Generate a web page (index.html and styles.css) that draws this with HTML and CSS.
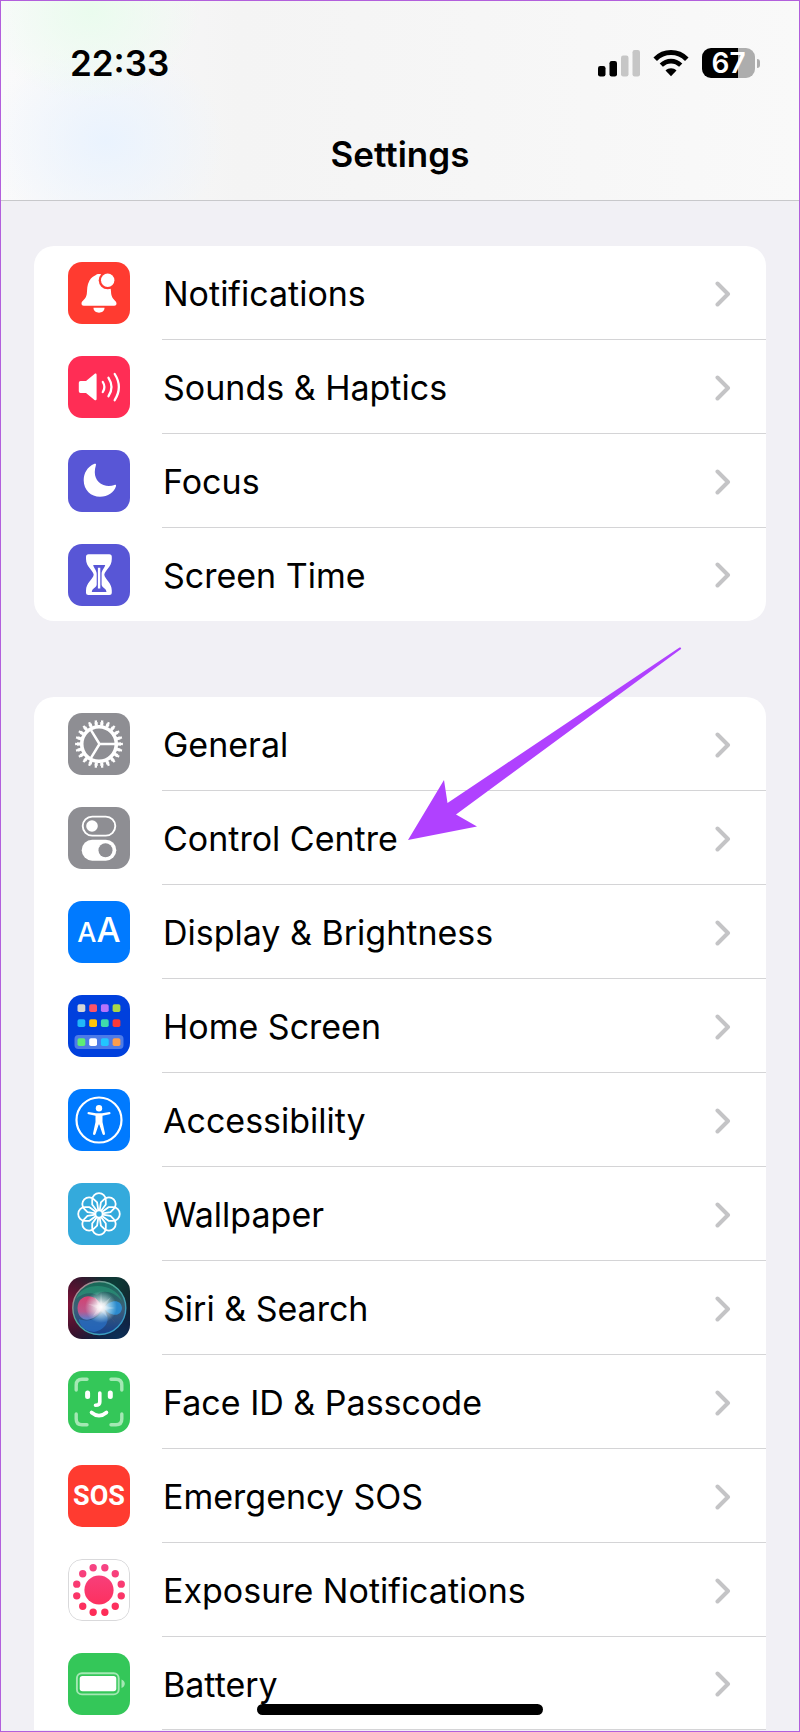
FILE: index.html
```html
<!DOCTYPE html>
<html lang="en">

<head>
  <meta charset="UTF-8">
  <meta name="viewport" content="width=device-width, initial-scale=1.0">
  <title>Settings</title>
  <link rel="stylesheet" href="styles.css">
</head>

<body>
  <svg width="0" height="0" class="defs" aria-hidden="true">
    <symbol id="chevron" viewBox="0 0 16 26">
      <path d="M2.5 2.5L13 13L2.5 23.5" fill="none" stroke="#c4c4c6" stroke-width="4" stroke-linecap="round" stroke-linejoin="round" />
    </symbol>
  </svg>

  <div class="screen">
    <header class="header">
      <div class="status-bar">
        <span class="time">22:33</span>
        <div class="status-icons">
          <svg width="42" height="27" viewBox="0 0 42 27">
            <rect x="0" y="16" width="7.500" height="10.500" rx="2.200" />
            <rect x="11.500" y="11" width="7.500" height="15.500" rx="2.200" />
            <rect x="23" y="5.500" width="7.500" height="21" rx="2.200" fill="#c6c6c6" />
            <rect x="34.500" y="0" width="7.500" height="26.500" rx="2.200" fill="#c6c6c6" />
          </svg>
          <svg width="36" height="27" viewBox="0 0 36 27">
            <path d="M2.200 9.200C11 .3 25 .3 33.800 9.200" fill="none" stroke="#000" stroke-width="5" />
            <path d="M8.300 15.200C14 9.700 22 9.700 27.700 15.200" fill="none" stroke="#000" stroke-width="4.600" />
            <path d="M12.500 20.500C15.500 17.600 20.500 17.600 23.500 20.500L18 26.200Z" />
          </svg>
          <div class="battery"><span>67</span></div>
        </div>
      </div>
      <h1>Settings</h1>
    </header>

    <main>
      <ul class="card">
        <li>
          <a href="#notifications" class="row">
            <svg class="icon red" viewBox="0 0 62 62">
              <path d="M13.500 41.500C13.500 38.500 18 37.500 18.800 32C19.300 27.500 18.800 23 21.500 18.500C23.200 15.300 26 14 27.500 13.300C29 11.500 33 11.500 34.500 13.300C37 14.500 39.300 16.500 40.700 19.500C43 24 42.800 28 43.200 32C44 37.500 48.500 38.500 48.500 41.500C48.500 43 47.500 43.700 46.300 43.700H15.700C14.500 43.700 13.500 43 13.500 41.500Z" fill="#fff" />
              <path d="M25.500 45.800H36.500C36.500 52.300 25.500 52.300 25.500 45.800Z" fill="#fff" />
              <circle cx="39.700" cy="18.300" r="9" fill="#ff3b30" />
              <circle cx="39.700" cy="18.300" r="6.700" fill="#fff" />
            </svg>
            <span class="row-body">Notifications <svg class="chevron"><use href="#chevron" /></svg></span>
          </a>
        </li>
        <li>
          <a href="#sounds" class="row">
            <svg class="icon pink" viewBox="0 0 62 62">
              <path d="M12.500 25H18L26.500 18C27.500 17.200 28.600 17.500 28.600 19V43C28.600 44.300 27.500 44.700 26.500 44L18 37H12.500Q10.800 37 10.800 35.300V26.700Q10.800 25 12.500 25Z" fill="#fff" />
              <path d="M34.800 26Q38 31 34.800 36M40.500 21.800Q46.500 31 40.500 40.200M46.700 18Q55 31 46.700 44.200" fill="none" stroke="#fff" stroke-width="2.300" stroke-linecap="round" />
            </svg>
            <span class="row-body">Sounds &amp; Haptics <svg class="chevron"><use href="#chevron" /></svg></span>
          </a>
        </li>
        <li>
          <a href="#focus" class="row">
            <svg class="icon indigo" viewBox="0 0 62 62">
              <path d="M26.500 13.800C19 17 15.700 23.500 15.700 30.200C15.700 39.800 23 46.800 32 46.800C40 46.800 46 42.500 48 36.300C48.300 35.100 47.500 34.600 46.500 35C43 36.200 39 36.300 35.500 35C28 32.300 25 24.500 27.900 15.200C28.300 14 27.700 13.300 26.500 13.800Z" fill="#fff" />
            </svg>
            <span class="row-body">Focus <svg class="chevron"><use href="#chevron" /></svg></span>
          </a>
        </li>
        <li>
          <a href="#screen-time" class="row">
            <svg class="icon indigo" viewBox="0 0 62 62">
              <path d="M20.500 10.300H41.300Q43.800 10.300 43.800 12.800V15C43.800 23 37 26 36.300 30.700C37 35.500 43.800 38.500 43.800 46.500V48.500Q43.800 51 41.300 51H20.500Q18 51 18 48.500V46.500C18 38.500 25 35.500 25.700 30.700C25 26 18 23 18 15V12.800Q18 10.300 20.500 10.300Z" fill="#fff" />
              <path d="M25.200 21H37.200C36.500 24.500 33.600 26 33.600 30V40.500C33.600 43.500 38.300 44 38.500 48H23.800C24 44 28.700 43.500 28.700 40.500V30C28.700 26 25.800 24.500 25.200 21Z" fill="#5856d6" />
              <path d="M31.100 23.500V44.500" stroke="#fff" stroke-width="2.400" />
              <path d="M27 22.500H35" stroke="#5856d6" stroke-width="2" />
            </svg>
            <span class="row-body">Screen Time <svg class="chevron"><use href="#chevron" /></svg></span>
          </a>
        </li>
      </ul>

      <ul class="card">
        <li>
          <a href="#general" class="row">
            <svg class="icon gray" viewBox="0 0 62 62">
              <g fill="none" stroke="#fff">
                <circle cx="31" cy="31" r="17.300" stroke-width="3.600" />
                <circle cx="31" cy="31" r="20.300" stroke-width="3.400" pathLength="44" stroke-dasharray="1.100 .9" stroke-dashoffset=".55" />
                <circle cx="31" cy="31" r="22.700" stroke-width="2.400" pathLength="44" stroke-dasharray=".7 1.300" stroke-dashoffset=".35" />
                <path d="M31.500 31H47M31.500 31L23 17.100M31.500 31L23 44.900" stroke-width="2.500" />
              </g>
            </svg>
            <span class="row-body">General <svg class="chevron"><use href="#chevron" /></svg></span>
          </a>
        </li>
        <li class="highlighted">
          <a href="#control-centre" class="row">
            <svg class="icon gray" viewBox="0 0 62 62">
              <rect x="14.700" y="9.600" width="32.600" height="19" rx="9.500" fill="none" stroke="#fff" stroke-width="1.900" />
              <circle cx="24" cy="19" r="5.800" fill="#fff" />
              <rect x="13.700" y="32.700" width="34.600" height="21" rx="10.500" fill="#fff" />
              <circle cx="37.500" cy="43.200" r="7" fill="#8e8e93" />
            </svg>
            <span class="row-body">Control Centre <svg class="chevron"><use href="#chevron" /></svg></span>
          </a>
          <svg class="arrow" viewBox="0 0 274 194" aria-hidden="true">
            <path d="M0 193L36 133L39.500 156L271.500 .5Q273.500 0 273 2L48 167.500L69 179.500Z" fill="#b041ff" />
          </svg>
        </li>
        <li>
          <a href="#display" class="row">
            <span class="icon icon-text blue"><span class="small-a">A</span><span class="big-a">A</span></span>
            <span class="row-body">Display &amp; Brightness <svg class="chevron"><use href="#chevron" /></svg></span>
          </a>
        </li>
        <li>
          <a href="#home-screen" class="row">
            <svg class="icon navy" viewBox="0 0 62 62">
              <rect x="6.500" y="40" width="49" height="14" rx="4" fill="#4d7be8" />
              <rect x="9.500" y="9.300" width="7.800" height="7.800" rx="1.800" fill="#d6d6d6" />
              <rect x="21.200" y="9.300" width="7.800" height="7.800" rx="1.800" fill="#fb5468" />
              <rect x="32.900" y="9.300" width="7.800" height="7.800" rx="1.800" fill="#b673fb" />
              <rect x="44.600" y="9.300" width="7.800" height="7.800" rx="1.800" fill="#a9d649" />
              <rect x="9.500" y="24.300" width="7.800" height="7.800" rx="1.800" fill="#21b7f9" />
              <rect x="21.200" y="24.300" width="7.800" height="7.800" rx="1.800" fill="#fdc40b" />
              <rect x="32.900" y="24.300" width="7.800" height="7.800" rx="1.800" fill="#3fd9ac" />
              <rect x="44.600" y="24.300" width="7.800" height="7.800" rx="1.800" fill="#fb3937" />
              <rect x="9.500" y="43.300" width="7.800" height="7.800" rx="1.800" fill="#5eed76" />
              <rect x="21.200" y="43.300" width="7.800" height="7.800" rx="1.800" fill="#fff" />
              <rect x="32.900" y="43.300" width="7.800" height="7.800" rx="1.800" fill="#22c6ff" />
              <rect x="44.600" y="43.300" width="7.800" height="7.800" rx="1.800" fill="#fd9d4b" />
            </svg>
            <span class="row-body">Home Screen <svg class="chevron"><use href="#chevron" /></svg></span>
          </a>
        </li>
        <li>
          <a href="#accessibility" class="row">
            <svg class="icon blue" viewBox="0 0 62 62">
              <circle cx="31" cy="31" r="22.500" fill="none" stroke="#fff" stroke-width="2.200" />
              <circle cx="31" cy="19.300" r="3.200" fill="#fff" />
              <path d="M20.500 23L28 24.200H34L41.500 23Q42.800 23.200 42.500 24.500Q42.300 25 41.500 25.200L34.500 26.800V33L37 44.500Q37 46 35.800 46Q34.900 46 34.500 45L31.300 35.500H30.700L27.500 45Q27.100 46 26.200 46Q25 46 25 44.500L27.500 33V26.800L20.500 25.200Q19.700 25 19.500 24.500Q19.200 23.200 20.500 23Z" fill="#fff" />
            </svg>
            <span class="row-body">Accessibility <svg class="chevron"><use href="#chevron" /></svg></span>
          </a>
        </li>
        <li>
          <a href="#wallpaper" class="row">
            <svg class="icon cyan" viewBox="0 0 62 62">
              <defs>
                <path id="petal" d="M29 28L24.200 21.500V17A6.800 6.800 0 0 1 37.800 17V21.500L33 28" />
              </defs>
              <g fill="none" stroke="#fff" stroke-width="1.800" stroke-linejoin="round">
                <use href="#petal" />
                <use href="#petal" transform="rotate(45 31 31)" />
                <use href="#petal" transform="rotate(90 31 31)" />
                <use href="#petal" transform="rotate(135 31 31)" />
                <use href="#petal" transform="rotate(180 31 31)" />
                <use href="#petal" transform="rotate(225 31 31)" />
                <use href="#petal" transform="rotate(270 31 31)" />
                <use href="#petal" transform="rotate(315 31 31)" />
                <circle cx="31" cy="31" r="3.600" />
              </g>
            </svg>
            <span class="row-body">Wallpaper <svg class="chevron"><use href="#chevron" /></svg></span>
          </a>
        </li>
        <li>
          <a href="#siri" class="row">
            <svg class="icon siri" viewBox="0 0 62 62">
              <defs>
                <linearGradient id="orb" x1="0" y1="0" x2="0" y2="1">
                  <stop offset="0" stop-color="#156a55" />
                  <stop offset=".5" stop-color="#3d5f78" />
                  <stop offset="1" stop-color="#153f8c" />
                </linearGradient>
                <linearGradient id="rim" x1="0" y1="0" x2="1" y2="1">
                  <stop offset="0" stop-color="#d9728e" />
                  <stop offset=".4" stop-color="#4fae97" />
                  <stop offset="1" stop-color="#2f95d8" />
                </linearGradient>
                <linearGradient id="lobe" x1="0" y1="0" x2="0" y2="1">
                  <stop offset="0" stop-color="#e63e72" />
                  <stop offset=".65" stop-color="#c9578f" />
                  <stop offset="1" stop-color="#5e86d8" />
                </linearGradient>
                <radialGradient id="glow">
                  <stop offset="0" stop-color="#fff" />
                  <stop offset=".25" stop-color="#fff" stop-opacity=".85" />
                  <stop offset="1" stop-color="#cff" stop-opacity="0" />
                </radialGradient>
              </defs>
              <circle cx="31.300" cy="31" r="26.500" fill="url(#orb)" stroke="url(#rim)" stroke-width="1.400" />
              <path d="M8 22C14 5 46 4 54 24C46 14 34 12 29 18C23 15 14 16 8 22Z" fill="#2fae84" opacity=".45" />
              <path d="M36 33C44 42 38 53 26 55C14 54 11 46 11 42C21 46 30 41 36 33Z" fill="#2a72c9" opacity=".7" />
              <path d="M34 31C29 15 10 16 9.500 31C10 48 28 45 34 31Z" fill="url(#lobe)" opacity=".9" />
              <path d="M36 31C41 23 53 21 54 31C53 41 41 39 36 31Z" fill="#2b8fd6" opacity=".9" />
              <path d="M36 32L49 48L41 38Z" fill="#e56b83" />
              <circle cx="33" cy="30" r="16" fill="url(#glow)" />
              <path d="M33 15L34.300 27L43 20L37 29L47 31L37 33L39 40L33 34L25 39L29.500 31.500L20 27L30 28L26 19L32 26Z" fill="#fff" opacity=".25" />
            </svg>
            <span class="row-body">Siri &amp; Search <svg class="chevron"><use href="#chevron" /></svg></span>
          </a>
        </li>
        <li>
          <a href="#face-id" class="row">
            <svg class="icon green" viewBox="0 0 62 62">
              <path d="M8.200 19V14Q8.200 8.200 14 8.200H19M43 8.200H48Q53.800 8.200 53.800 14V19M53.800 43V48Q53.800 53.800 48 53.800H43M19 53.800H14Q8.200 53.800 8.200 48V43" fill="none" stroke="#a4e8b4" stroke-width="3.400" stroke-linecap="round" />
              <path d="M19.600 22V25.500M42.300 22V25.500" stroke="#fff" stroke-width="5" stroke-linecap="round" />
              <path d="M31.800 22V31Q31.800 34.300 27.500 34.300M23.500 41.500Q31 47.800 38.500 41.500" fill="none" stroke="#fff" stroke-width="3.600" stroke-linecap="round" />
            </svg>
            <span class="row-body">Face ID &amp; Passcode <svg class="chevron"><use href="#chevron" /></svg></span>
          </a>
        </li>
        <li>
          <a href="#sos" class="row">
            <span class="icon icon-text red sos">SOS</span>
            <span class="row-body">Emergency SOS <svg class="chevron"><use href="#chevron" /></svg></span>
          </a>
        </li>
        <li>
          <a href="#exposure" class="row">
            <svg class="icon outlined" viewBox="0 0 62 62">
              <defs>
                <linearGradient id="exposure" x1="0" y1="0" x2="0" y2="62" gradientUnits="userSpaceOnUse">
                  <stop offset="0" stop-color="#f5478a" />
                  <stop offset="1" stop-color="#ff2850" />
                </linearGradient>
              </defs>
              <rect x=".5" y=".5" width="61" height="61" rx="13.500" fill="#fff" stroke="#d9d9db" />
              <circle cx="31" cy="31" r="14.600" fill="url(#exposure)" />
              <circle cx="31" cy="31" r="23" fill="none" stroke="url(#exposure)" stroke-width="7.400" stroke-linecap="round" pathLength="12" stroke-dasharray="0 1" stroke-dashoffset=".5" />
            </svg>
            <span class="row-body">Exposure Notifications <svg class="chevron"><use href="#chevron" /></svg></span>
          </a>
        </li>
        <li>
          <a href="#battery" class="row">
            <svg class="icon green" viewBox="0 0 62 62">
              <rect x="8.900" y="20.200" width="41.800" height="21.200" rx="5" fill="none" stroke="#a4e8b4" stroke-width="1.900" />
              <rect x="11.700" y="23" width="36.600" height="15.300" rx="2.800" fill="#fff" />
              <path d="M53.500 26.500Q56.800 28 56.800 30.800Q56.800 33.600 53.500 35Z" fill="#a4e8b4" />
            </svg>
            <span class="row-body">Battery <svg class="chevron"><use href="#chevron" /></svg></span>
          </a>
        </li>
      </ul>
    </main>

    <div class="home-indicator"></div>
  </div>
</body>

</html>
```
FILE: styles.css
```css
* {
  box-sizing: border-box;
}

body {
  margin: 0;
  font-family: Inter, "Liberation Sans", sans-serif;
  color: #000;
  background-color: #f1f0f5;
}

.defs {
  position: absolute;
}

.screen {
  min-height: 100vh;
  border: 1px solid #b25fdc;
}

/* header */
.header {
  height: 200px;
  padding-top: 44px;
  border-bottom: 1px solid #c8c8cb;
  background:
    radial-gradient(ellipse 110px 90px at 90px 10px, #eafcee, transparent),
    radial-gradient(ellipse 120px 100px at 105px 140px, #eaf3fe, transparent),
    linear-gradient(to right, #fafafb, #f4f4f4 30%, #f6f6f6 60%, #f9f9f9);
}

.status-bar {
  display: flex;
  justify-content: space-between;
  align-items: center;
  height: 36px;
  padding: 0 39px 0 69px;
}

.time {
  font-size: 35px;
  font-weight: 600;
}

.status-icons {
  display: flex;
  align-items: center;
  gap: 13px;
}

.battery {
  position: relative;
  display: flex;
  align-items: center;
  justify-content: center;
  width: 53px;
  height: 30px;
  margin-right: 5px;
  border-radius: 9px;
  background: linear-gradient(to right, #000 67%, #adadad 67%);
  color: #fff;
  font-size: 28px;
  font-weight: 600;
}

.battery::after {
  content: "";
  position: absolute;
  right: -5px;
  width: 3px;
  height: 9px;
  border-radius: 0 4px 4px 0;
  background-color: #adadad;
}

h1 {
  margin: 52px 0 0;
  font-size: 35px;
  line-height: 42px;
  font-weight: 600;
  text-align: center;
}

/* list */
main {
  display: flex;
  flex-direction: column;
  gap: 76px;
  padding: 45px 33px 0;
}

.card {
  margin: 0;
  padding: 0;
  list-style: none;
  background-color: #fff;
  border-radius: 20px;
}

.card:last-child {
  border-radius: 20px 20px 0 0;
}

.row {
  display: flex;
  align-items: center;
  gap: 32px;
  height: 94px;
  padding-left: 34px;
  color: inherit;
  text-decoration: none;
}

li:last-child .row {
  height: 93px;
}

.row-body {
  display: flex;
  flex: 1;
  align-items: center;
  justify-content: space-between;
  height: 100%;
  padding: 2px 35px 0 1px;
  border-bottom: 1px solid #d4d4d6;
  font-size: 34px;
}

.card:first-child li:last-child .row-body {
  border-bottom-color: transparent;
}

.chevron {
  width: 16px;
  height: 26px;
}

.icon {
  flex: none;
  width: 62px;
  height: 62px;
  border-radius: 14px;
}

.icon-text {
  display: flex;
  align-items: baseline;
  justify-content: center;
  line-height: 58px;
  color: #fff;
}

.small-a {
  font-size: 27px;
  font-weight: 500;
}

.big-a {
  font-size: 34px;
  font-weight: 500;
}

.sos {
  font-family: Roboto, sans-serif;
  font-size: 27px;
  font-weight: 700;
  line-height: 62px;
}

.red {
  background-color: #ff3b30;
}

.pink {
  background-color: #ff2d55;
}

.indigo {
  background-color: #5856d6;
}

.gray {
  background-color: #8e8e93;
}

.blue {
  background-color: #007aff;
}

.navy {
  background-color: #0040dd;
}

.cyan {
  background-color: #34aadc;
}

.green {
  background-color: #34c759;
}

.siri {
  background:
    radial-gradient(circle at 0 45%, #7e1438, transparent 60%),
    radial-gradient(circle at 75% 10%, #0c3d37, transparent 60%),
    radial-gradient(circle at 80% 100%, #0a3058, transparent 60%),
    #1b1026;
}

/* pointer to the highlighted row */
.highlighted {
  position: relative;
}

.arrow {
  position: absolute;
  left: 374px;
  bottom: 44px;
  width: 274px;
  height: 194px;
  pointer-events: none;
}

.home-indicator {
  position: fixed;
  bottom: 17px;
  left: 50%;
  width: 286px;
  height: 11px;
  margin-left: -143px;
  border-radius: 6px;
  background-color: #000;
}
```
